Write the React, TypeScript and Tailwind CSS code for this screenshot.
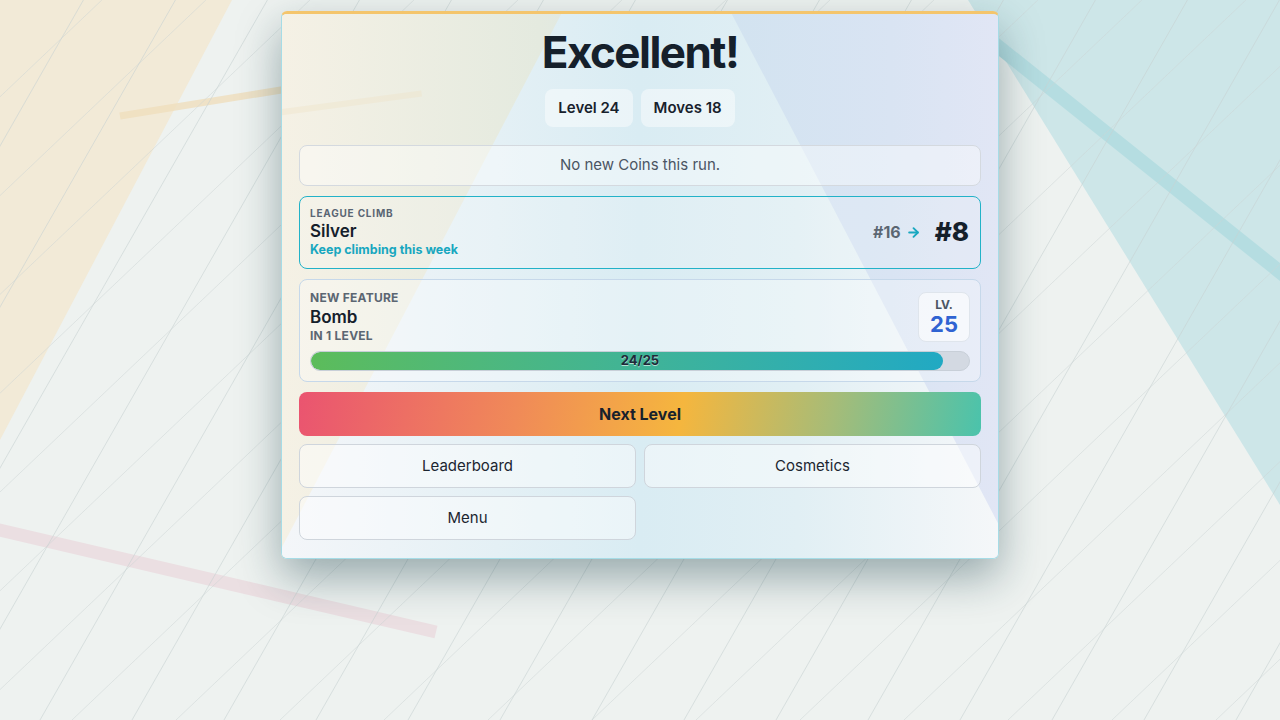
import { ArrowRight } from "lucide-react";

const FONT = { fontFamily: "Inter, 'Noto Sans', sans-serif" };

// thin diagonal lines across the page
const linesA = Array.from({ length: 22 }, (_, i) => -420 + i * 92);
const linesB = Array.from({ length: 24 }, (_, i) => -760 + i * 104);

function Backdrop() {
  return (
    <svg className="absolute inset-0 w-full h-full" viewBox="0 0 1280 720" preserveAspectRatio="none">
      <rect width="1280" height="720" fill="#eef2f0" />
      <polygon points="0,0 232,0 0,440" fill="#f2ead7" />
      <polygon points="968,0 1280,0 1280,505" fill="#cde6e8" />
      <line x1="120" y1="116" x2="430" y2="66" stroke="#f0dfbd" strokeWidth="7" opacity="0.8" />
      <line x1="-5" y1="529" x2="436" y2="632" stroke="#ebdfe2" strokeWidth="13" />
      <line x1="985" y1="36" x2="1290" y2="280" stroke="#b5dde1" strokeWidth="14" />
      {linesA.map((x) => (
        <line key={"a" + x} x1={x} y1="720" x2={x + 720 / 1.75} y2="0" stroke="#c8d1d2" strokeWidth="0.6" />
      ))}
      {linesB.map((x) => (
        <line key={"b" + x} x1={x} y1="720" x2={x + 720 / 0.95} y2="0" stroke="#ccd4d4" strokeWidth="0.5" />
      ))}
    </svg>
  );
}

function CardArt() {
  return (
    <svg className="absolute inset-0 w-full h-full" viewBox="0 0 718 547" preserveAspectRatio="none">
      <defs>
        <linearGradient id="base" x1="0" y1="0" x2="1" y2="0">
          <stop offset="0" stopColor="#f5f1e5" />
          <stop offset="0.36" stopColor="#e4eadf" />
          <stop offset="0.62" stopColor="#d2e3f0" />
          <stop offset="0.85" stopColor="#d9e4f3" />
          <stop offset="1" stopColor="#e1e6f5" />
        </linearGradient>
        <linearGradient id="mid" gradientUnits="userSpaceOnUse" x1="0" y1="0" x2="718" y2="0">
          <stop offset="0" stopColor="#f4f6f9" />
          <stop offset="0.3" stopColor="#e4f0f5" />
          <stop offset="0.5" stopColor="#d9ecf3" />
          <stop offset="0.72" stopColor="#e1eff4" />
          <stop offset="1" stopColor="#f5f7f9" />
        </linearGradient>
      </defs>
      <rect width="718" height="547" fill="url(#base)" />
      <polygon points="280,0 451,0 718,512 718,547 0,547 0,536" fill="url(#mid)" />
      <line x1="-10" y1="100" x2="140" y2="80" stroke="#efe2c4" strokeWidth="6" opacity="0.35" />
    </svg>
  );
}

function Pill({ children }: { children: React.ReactNode }) {
  return (
    <div className="h-[38px] px-[13px] flex items-center rounded-lg bg-white/45 text-[15px] font-semibold text-[#17212c]">
      {children}
    </div>
  );
}

function GhostButton({ label }: { label: string }) {
  return (
    <button className="h-[44px] rounded-lg border border-[#cfd5dc] bg-white/45 text-[15px] text-[#1c2530]">
      {label}
    </button>
  );
}

export default function App() {
  return (
    <div className="relative w-full h-screen overflow-hidden" style={FONT}>
      <Backdrop />

      <div className="relative z-10 w-[718px] mx-auto mt-[11px] rounded-md border border-[#a6dce6] border-t-[3px] border-t-[#f4c56c] overflow-hidden shadow-[0_18px_44px_rgba(20,60,70,0.4)]">
        <CardArt />

        <div className="relative px-[17px] pt-[13px] pb-[18px]">
          {/* Header */}
          <h1 className="text-center text-[44px] leading-[50px] font-bold tracking-[-0.035em] text-[#15202b]">Excellent!</h1>
          <div className="flex justify-center gap-2 mt-[12px]">
            <Pill>Level 24</Pill>
            <Pill>Moves 18</Pill>
          </div>

          <div className="mt-[18px] flex flex-col gap-[10px]">
            {/* Coins */}
            <div className="h-[41px] flex items-center justify-center rounded-lg border border-[#d4d9df] bg-white/40 text-[15px] text-[#4b5563]">
              No new Coins this run.
            </div>

            {/* League */}
            <div className="flex items-center justify-between rounded-lg border border-[#22b2c8] bg-white/15 pl-[10px] pr-[11px] pt-[9px] pb-[10px]">
              <div>
                <p className="text-[10px] leading-[14px] font-bold tracking-[0.08em] text-[#5a6573]">LEAGUE CLIMB</p>
                <p className="text-[17px] leading-[22px] font-semibold text-[#15202b]">Silver</p>
                <p className="text-[12.5px] leading-[16px] font-bold text-[#18a7bf]">Keep climbing this week</p>
              </div>
              <div className="flex items-center">
                <span className="text-[16px] font-bold text-[#5b6672]">#16</span>
                <ArrowRight className="ml-[5px] w-[15px] h-[15px] text-[#1aa8c0]" strokeWidth={3} />
                <span className="ml-[14px] text-[26px] leading-none font-extrabold text-[#15202b]">#8</span>
              </div>
            </div>

            {/* Feature */}
            <div className="rounded-lg border border-[#c6d8ea] bg-white/30 px-[10px] pt-[10px] pb-[10px]">
              <div className="flex justify-between items-start">
                <div>
                  <p className="text-[12px] leading-[16px] font-bold tracking-[0.02em] text-[#5b6672]">NEW FEATURE</p>
                  <p className="text-[17px] leading-[22px] font-semibold text-[#15202b]">Bomb</p>
                  <p className="text-[12px] leading-[16px] font-bold tracking-[0.02em] text-[#5b6672]">IN 1 LEVEL</p>
                </div>
                <div className="mt-[2px] w-[52px] h-[50px] flex flex-col items-center justify-center rounded-lg border border-[#dfe5ec] bg-white/60">
                  <span className="text-[12px] leading-[14px] font-bold text-[#4b5563]">LV.</span>
                  <span className="text-[22px] leading-[25px] font-bold text-[#2f63d2]">25</span>
                </div>
              </div>
              <div className="relative mt-[7px] h-5 rounded-full bg-[#d3d9e2] border border-[#c8cfd8] overflow-hidden">
                <div className="h-full rounded-full bg-gradient-to-r from-[#5cbc5a] to-[#21a9c3]" style={{ width: `${(24 / 25) * 100}%` }} />
                <span className="absolute inset-0 flex items-center justify-center text-[13px] font-bold text-[#1f2937] [text-shadow:0_1px_0_rgba(255,255,255,0.6)]">
                  24/25
                </span>
              </div>
            </div>

            {/* Actions */}
            <button className="h-[44px] rounded-lg text-[16px] font-bold text-[#18212c] bg-[linear-gradient(100deg,#ea5470_0%,#f08a58_32%,#f5b63e_56%,#a6bc78_78%,#4ac3ac_100%)]">
              Next Level
            </button>
          </div>

          <div className="mt-[8px] grid grid-cols-2 gap-2">
            <GhostButton label="Leaderboard" />
            <GhostButton label="Cosmetics" />
            <GhostButton label="Menu" />
          </div>
        </div>
      </div>
    </div>
  );
}
